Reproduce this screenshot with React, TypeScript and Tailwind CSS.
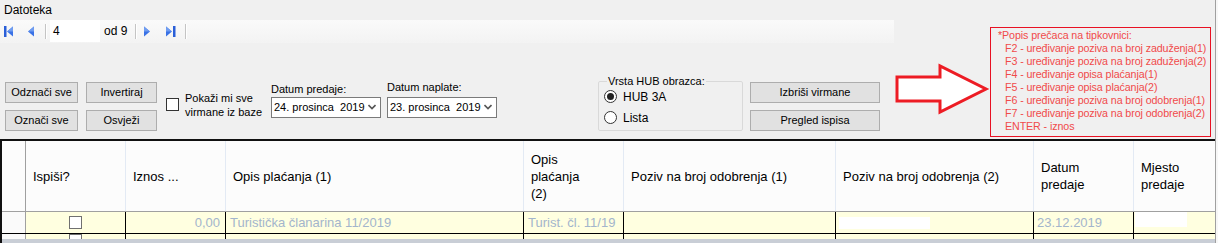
import React from "react";

const FONT = "font-['Liberation_Sans',Arial,sans-serif]";

function FirstIcon() {
  return (
    <svg width="9" height="11" viewBox="0 0 9 11">
      <rect x="0" y="0" width="2.5" height="11" fill="#2a5fd8" />
      <polygon points="9,0.5 3,5.5 9,10.5" fill="#3a72e6" />
      <polygon points="9,0.5 3,5.5 9,5.5" fill="#6f9cf0" />
    </svg>
  );
}
function PrevIcon() {
  return (
    <svg width="6" height="11" viewBox="0 0 6 11">
      <polygon points="6,0.5 0,5.5 6,10.5" fill="#3a72e6" />
      <polygon points="6,0.5 0,5.5 6,5.5" fill="#6f9cf0" />
    </svg>
  );
}
function NextIcon() {
  return (
    <svg width="6" height="11" viewBox="0 0 6 11">
      <polygon points="0,0.5 6,5.5 0,10.5" fill="#3a72e6" />
      <polygon points="0,0.5 6,5.5 0,5.5" fill="#6f9cf0" />
    </svg>
  );
}
function LastIcon() {
  return (
    <svg width="10" height="11" viewBox="0 0 10 11">
      <polygon points="0,0.5 6,5.5 0,10.5" fill="#3a72e6" />
      <polygon points="0,0.5 6,5.5 0,5.5" fill="#6f9cf0" />
      <rect x="7" y="0" width="2.5" height="11" fill="#2a5fd8" />
    </svg>
  );
}

function Sep() {
  return <div className="h-[15px] w-[2px] border-l border-[#c4c4c4] bg-white" />;
}

function Btn({ children, w }: { children: React.ReactNode; w: string }) {
  return (
    <div
      className={`${w} flex h-[21px] items-center justify-center border border-[#adadad] bg-[#e1e1e1] text-[11px] text-black`}
    >
      {children}
    </div>
  );
}

function Combo({ text }: { text: string }) {
  return (
    <div className="flex h-[21px] w-[110px] items-center border border-[#7a7a7a] bg-white pl-[2px] pr-[4px] text-[11px] text-black">
      <span className="flex-1 overflow-hidden whitespace-pre">{text}</span>
      <svg width="8" height="6" viewBox="0 0 8 6">
        <polyline points="0.5,1 4,4.5 7.5,1" fill="none" stroke="#555" strokeWidth="1.6" />
      </svg>
    </div>
  );
}

function Radio({ checked }: { checked?: boolean }) {
  return (
    <div className="flex h-[13px] w-[13px] items-center justify-center rounded-full border border-[#333] bg-white">
      {checked && <div className="h-[7px] w-[7px] rounded-full bg-[#222]" />}
    </div>
  );
}

const COLS = "grid-cols-[24px_100px_100px_298px_100px_212px_198px_100px_80px]";

export default function App() {
  const shortcuts = [
    "F2 - uređivanje poziva na broj zaduženja(1)",
    "F3 - uređivanje poziva na broj zaduženja(2)",
    "F4 - uređivanje opisa plaćanja(1)",
    "F5 - uređivanje opisa plaćanja(2)",
    "F6 - uređivanje poziva na broj odobrenja(1)",
    "F7 - uređivanje poziva na broj odobrenja(2)",
    "ENTER - iznos",
  ];
  return (
    <div className={`${FONT} flex h-[243px] w-[1218px] overflow-hidden bg-[#f0f0f0] text-black`}>
      <div className="flex w-[1215px] flex-col">
        {/* menu */}
        <div className="flex h-[20px] items-center pl-[4px] text-[12px]">Datoteka</div>

        {/* top area */}
        <div className="flex h-[121px] items-start">
          <div className="flex w-[894px] flex-col">
            {/* toolbar */}
            <div className="flex h-[23px] items-center bg-gradient-to-b from-[#fafafa] to-[#f3f3f3] pl-[4px] text-[12px]">
              <FirstIcon />
              <div className="ml-[15px]">
                <PrevIcon />
              </div>
              <div className="ml-[11px]">
                <Sep />
              </div>
              <div className="ml-[3px] flex h-[22px] w-[50px] items-center bg-white pl-[3px]">4</div>
              <div className="ml-[4px] w-[31px]">od 9</div>
              <Sep />
              <div className="ml-[7px]">
                <NextIcon />
              </div>
              <div className="ml-[16px]">
                <LastIcon />
              </div>
              <div className="ml-[9px]">
                <Sep />
              </div>
            </div>

            {/* controls */}
            <div className="flex items-start pl-[5px] text-[11px]">
              <div className="mt-[39px] grid grid-cols-[73px_71px] gap-x-[8px] gap-y-[7px]">
                <Btn w="w-[73px]">Odznači sve</Btn>
                <Btn w="w-[71px]">Invertiraj</Btn>
                <Btn w="w-[73px]">Označi sve</Btn>
                <Btn w="w-[71px]">Osvježi</Btn>
              </div>
              <div className="ml-[9px] mt-[48px] flex w-[105px] items-start">
                <div className="mt-[7px] h-[13px] w-[13px] border border-[#333] bg-white" />
                <div className="ml-[6px] text-[11px] leading-[14px]">
                  Pokaži mi sve
                  <br />
                  virmane iz baze
                </div>
              </div>
              <div className="mt-[39px] flex w-[110px] flex-col">
                <div className="h-[14px] leading-[14px]">Datum predaje:</div>
                <div className="mt-[1px]">
                  <Combo text="24. prosinca  2019" />
                </div>
              </div>
              <div className="ml-[6px] mt-[37px] flex w-[110px] flex-col">
                <div className="h-[14px] leading-[14px]">Datum naplate:</div>
                <div className="mt-[3px]">
                  <Combo text="23. prosinca  2019" />
                </div>
              </div>
              <fieldset className="ml-[101px] mt-[32px] h-[56px] w-[145px] rounded-[2px] border border-[#d9d9d9] pl-[5px]">
                <legend className="ml-[3px] px-[1px] text-[11px] leading-[13px]">Vrsta HUB obrazca:</legend>
                <div className="mt-[1px] flex h-[16px] items-center">
                  <Radio checked />
                  <span className="ml-[6px] text-[12px]">HUB 3A</span>
                </div>
                <div className="mt-[5px] flex h-[16px] items-center">
                  <Radio />
                  <span className="ml-[6px] text-[12px]">Lista</span>
                </div>
              </fieldset>
              <div className="ml-[7px] mt-[39px] flex flex-col gap-[7px]">
                <Btn w="w-[130px]">Izbriši virmane</Btn>
                <Btn w="w-[130px]">Pregled ispisa</Btn>
              </div>
            </div>
          </div>

          {/* arrow */}
          <svg className="mt-[43px]" width="96" height="52" viewBox="0 0 96 52">
            <polygon
              points="3,14 46,14 46,3 92,26 46,49 46,38 3,38"
              fill="#ffffff"
              stroke="#ed1c24"
              strokeWidth="3"
              strokeLinejoin="miter"
            />
          </svg>

          {/* shortcuts box */}
          <div className="mt-[7px] h-[110px] w-[221px] overflow-hidden whitespace-nowrap border border-[#e81123] pl-[7px] text-[10.7px] leading-[13px] tracking-[-0.1px] text-[#f04a4a]">
            <div className="mt-[1px]">*Popis prečaca na tipkovnici:</div>
            {shortcuts.map((s) => (
              <div key={s} className="pl-[7px]">
                {s}
              </div>
            ))}
          </div>
        </div>

        {/* table */}
        <div className="flex flex-col border-l-2 border-t-2 border-[#111] bg-white">
          {/* header */}
          <div className={`grid ${COLS} h-[71px] border-b border-[#a0a0a0] bg-[#fcfcfc] text-[13px] leading-[17px]`}>
            <div className="border-r border-[#a0a0a0]" />
            <div className="flex items-center border-r border-[#e3eaf4] pl-[7px]">Ispiši?</div>
            <div className="flex items-center border-r border-[#e3eaf4] pl-[7px]">Iznos ...</div>
            <div className="flex items-center border-r border-[#e3eaf4] pl-[7px]">Opis plaćanja (1)</div>
            <div className="flex items-center border-r border-[#e3eaf4] pl-[7px]">
              <div>
                Opis
                <br />
                plaćanja
                <br />
                (2)
              </div>
            </div>
            <div className="flex items-center border-r border-[#e3eaf4] pl-[7px]">Poziv na broj odobrenja (1)</div>
            <div className="flex items-center border-r border-[#e3eaf4] pl-[7px]">Poziv na broj odobrenja (2)</div>
            <div className="flex items-center border-r border-[#e3eaf4] pl-[7px]">
              <div>
                Datum
                <br />
                predaje
              </div>
            </div>
            <div className="flex items-center pl-[7px]">
              <div>
                Mjesto
                <br />
                predaje
              </div>
            </div>
          </div>

          {/* data row */}
          <div className={`grid ${COLS} h-[22px] border-b border-black bg-[#ffffe0] text-[13px] text-[#a3b5cc]`}>
            <div className="border-r border-[#a0a0a0] bg-[#fafafa]" />
            <div className="flex items-center justify-center border-r border-black">
              <div className="h-[13px] w-[13px] border border-[#707070] bg-white" />
            </div>
            <div className="flex items-center justify-end border-r border-black pr-[5px]">0,00</div>
            <div className="flex items-center border-r border-black pl-[4px]">Turistička članarina 11/2019</div>
            <div className="flex items-center border-r border-black pl-[4px]">Turist. čl. 11/19</div>
            <div className="border-r border-black" />
            <div className="flex items-center border-r border-black pl-[3px]">
              <div className="h-[12px] w-[91px] bg-white" />
            </div>
            <div className="flex items-center border-r border-black pl-[3px]">23.12.2019</div>
            <div className="flex items-start pl-[1px]">
              <div className="h-[15px] w-[52px] bg-white" />
            </div>
          </div>

          {/* partial next row */}
          <div className={`grid ${COLS} h-[5px] bg-[#ffffe0]`}>
            <div className="border-r border-[#a0a0a0] bg-[#fafafa]" />
            <div className="flex justify-center border-r border-black">
              <div className="h-[5px] w-[13px] border-x border-t border-[#707070] bg-white" />
            </div>
            <div className="border-r border-black" />
            <div className="border-r border-black" />
            <div className="border-r border-black" />
            <div className="border-r border-black" />
            <div className="border-r border-black" />
            <div className="border-r border-black" />
            <div />
          </div>
          <div className="h-[4px] bg-[#c9ced6]" />
        </div>
      </div>
      <div className="w-[3px] border-l border-[#a0a0a0] bg-[#f7f7f7]" />
    </div>
  );
}
